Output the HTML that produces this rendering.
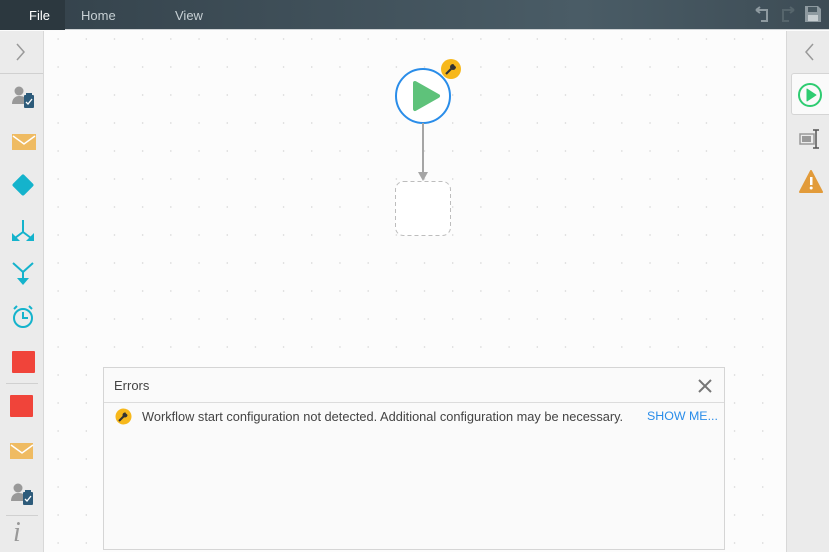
<!DOCTYPE html>
<html><head><style>
*{margin:0;padding:0;box-sizing:border-box}
body{width:829px;height:552px;overflow:hidden;font-family:"Liberation Sans","DejaVu Sans",sans-serif;background:#fcfcfc;position:relative}
.top{position:absolute;left:0;top:0;width:829px;height:30px;background:linear-gradient(90deg,#33414a,#4a5c66 70%,#3d4c55);border-bottom:1px solid #cfd3d5}
.top span{position:absolute;top:8px;font-size:13px;color:#c7d0d4}
.file{position:absolute;left:0;top:0;width:65px;height:30px;background:#2c383f}
.left{position:absolute;left:0;top:31px;width:44px;height:521px;background:#ebebeb;border-right:1px solid #d8d8d8}
.right{position:absolute;left:786px;top:31px;width:43px;height:521px;background:#ebebeb;border-left:1px solid #d8d8d8}
.canvas{position:absolute;left:45px;top:31px;width:741px;height:521px;background-image:radial-gradient(circle,#d6d6d6 0.7px,transparent 0.9px);background-size:28.2px 28px;background-position:-1px -6px}
.ic{position:absolute}
.err{position:absolute;left:103px;top:367px;width:622px;height:183px;background:#fafafa;border:1px solid #d5d5d5}
.err .h{height:35px;border-bottom:1px solid #dcdcdc;font-size:13px;color:#444;padding:10px 10px}
</style></head><body>
<div class="top"><div class="file"></div>
<span style="left:29px;color:#fff">File</span><span style="left:81px">Home</span><span style="left:175px">View</span>
<svg class="ic" style="left:752px;top:6px" width="20" height="18"><path d="M4 4h11v11h-6M4 4l4-3M4 4l4 3" stroke="#8e9aa0" stroke-width="2" fill="none"/></svg>
<svg class="ic" style="left:778px;top:6px" width="20" height="18"><path d="M16 4H5v11h6M16 4l-4-3M16 4l-4 3" stroke="#56656c" stroke-width="2" fill="none"/></svg>
<svg class="ic" style="left:804px;top:5px" width="18" height="18"><path d="M1 1h13l3 3v13H1z" fill="#8e9aa0"/><rect x="4" y="2" width="9" height="5" fill="#4a5a62"/><rect x="4" y="10" width="10" height="6" fill="#c6cdd0"/></svg>
</div>
<div class="canvas"></div>
<div class="left">
<svg class="ic" style="left:15px;top:12px" width="12" height="18"><path d="M2 1l7 8-7 8" stroke="#999" stroke-width="1.5" fill="none"/></svg>
<div style="position:absolute;left:0;top:42px;width:43px;height:1px;background:#d0d0d0"></div>
<svg class="ic" style="left:10px;top:54px" width="26" height="26"><circle cx="9" cy="6" r="4.5" fill="#999"/><path d="M2 19c0-5 3-8 7-8s6 1 7 3v5z" fill="#999"/><rect x="14" y="10" width="10" height="13" rx="1" fill="#2d5b7a"/><rect x="16" y="8" width="6" height="3" fill="#2d5b7a"/><path d="M16 17l2 2 4-5" stroke="#fff" stroke-width="1.3" fill="none"/></svg>
<svg class="ic" style="left:12px;top:102px" width="24" height="18"><rect x="0" y="1" width="24" height="16" fill="#efbb62"/><path d="M1 3l11 8 11-8" stroke="#fff" stroke-width="1.5" fill="none"/></svg>
<svg class="ic" style="left:11px;top:142px" width="24" height="24"><rect x="4" y="4" width="16" height="16" rx="2" transform="rotate(45 12 12)" fill="#14b3cc"/></svg>
<svg class="ic" style="left:11px;top:188px" width="24" height="24"><path d="M12 1v12M12 13l-8 6M12 13l8 6" stroke="#14b3cc" stroke-width="2" fill="none"/><path d="M1 14v8h8zM23 14v8h-8z" fill="#14b3cc"/></svg>
<svg class="ic" style="left:11px;top:230px" width="24" height="26"><path d="M2 2l10 9 10-9M12 11v8" stroke="#14b3cc" stroke-width="2" fill="none"/><path d="M6 17h12l-6 7z" fill="#14b3cc"/></svg>
<svg class="ic" style="left:11px;top:273px" width="24" height="26"><circle cx="12" cy="14" r="9" stroke="#14b3cc" stroke-width="2" fill="none"/><path d="M12 8v6h5M3 5l3-3M21 5l-3-3" stroke="#14b3cc" stroke-width="2" fill="none"/></svg>
<div style="position:absolute;left:12px;top:320px;width:23px;height:22px;background:#f0443a;border-radius:1px"></div>
<div style="position:absolute;left:6px;top:352px;width:32px;height:1px;background:#d0d0d0"></div>
<div style="position:absolute;left:10px;top:364px;width:23px;height:22px;background:#f0443a;border-radius:1px"></div>
<svg class="ic" style="left:10px;top:411px" width="24" height="18"><rect x="0" y="1" width="23" height="16" fill="#efbb62"/><path d="M1 3l11 8 11-8" stroke="#fff" stroke-width="1.5" fill="none"/></svg>
<svg class="ic" style="left:9px;top:451px" width="26" height="26"><circle cx="9" cy="6" r="4.5" fill="#999"/><path d="M2 19c0-5 3-8 7-8s6 1 7 3v5z" fill="#999"/><rect x="14" y="10" width="10" height="13" rx="1" fill="#2d5b7a"/><rect x="16" y="8" width="6" height="3" fill="#2d5b7a"/><path d="M16 17l2 2 4-5" stroke="#fff" stroke-width="1.3" fill="none"/></svg>
<div style="position:absolute;left:6px;top:484px;width:32px;height:1px;background:#d0d0d0"></div>
<div style="position:absolute;left:13px;top:486px;font:italic 28px 'Liberation Serif',serif;color:#999">i</div>
</div>
<div class="right">
<svg class="ic" style="left:17px;top:12px" width="12" height="18"><path d="M9 1L2 9l7 8" stroke="#999" stroke-width="1.5" fill="none"/></svg>
<div style="position:absolute;left:4px;top:42px;width:40px;height:42px;background:#fafafa;border:1px solid #d5d5d5;border-right:none;border-radius:3px 0 0 3px"></div>
<svg class="ic" style="left:10px;top:51px" width="26" height="26"><circle cx="13" cy="13" r="11" stroke="#2ecc71" stroke-width="2" fill="none"/><path d="M10 7l9 6-9 6z" fill="#2ecc71" stroke="#2ecc71" stroke-linejoin="round"/></svg>
<svg class="ic" style="left:12px;top:97px" width="24" height="22"><rect x="1" y="6" width="14" height="10" stroke="#999" stroke-width="1.5" fill="none"/><rect x="3" y="8" width="9" height="6" fill="#999"/><path d="M17 2v18M14 2h6M14 20h6" stroke="#555" stroke-width="1.5"/></svg>
<svg class="ic" style="left:12px;top:139px" width="24" height="24"><path d="M12 1l11 21H1z" fill="#e29b3a" stroke="#e29b3a" stroke-linejoin="round" stroke-width="2"/><rect x="11" y="7" width="2.5" height="8" fill="#fff"/><circle cx="12.2" cy="18" r="1.5" fill="#fff"/></svg>
</div>
<svg class="ic" style="left:394px;top:66px" width="70" height="172">
<circle cx="29" cy="30" r="27" fill="#fff" stroke="#2a8de9" stroke-width="2"/>
<polygon points="21,17 44,30 21,43" fill="#5ec27a" stroke="#5ec27a" stroke-width="4" stroke-linejoin="round"/>
<line x1="29" y1="57" x2="29" y2="108" stroke="#a5a5a5" stroke-width="2"/>
<path d="M24 106h10l-5 9z" fill="#a5a5a5"/>
<rect x="1.5" y="115.5" width="55" height="54" rx="8" fill="#fff" stroke="#bdbdbd" stroke-dasharray="4 3"/>
</svg>
<svg class="ic" style="left:440px;top:58px" width="22" height="22"><circle cx="11" cy="11" r="10" fill="#f7b81b"/><path d="M6 16l5-5" stroke="#333" stroke-width="2.2"/><circle cx="13" cy="9" r="3" fill="#333"/><path d="M14 6l3 3" stroke="#f7b81b" stroke-width="1.5"/></svg>
<div class="err"><div class="h">Errors</div>
<svg class="ic" style="left:594px;top:11px" width="14" height="14"><path d="M1 1l12 12M13 1L1 13" stroke="#777" stroke-width="2"/></svg>
<svg class="ic" style="left:11px;top:40px" width="17" height="17"><circle cx="8.5" cy="8.5" r="8" fill="#f7b81b"/><path d="M4 13l5-5" stroke="#333" stroke-width="2"/><circle cx="10" cy="7" r="2.5" fill="#333"/><path d="M11 4.5l2.5 2.5" stroke="#f7b81b" stroke-width="1.3"/></svg>
<div style="position:absolute;left:38px;top:41px;font-size:12.8px;color:#444">Workflow start configuration not detected. Additional configuration may be necessary.</div>
<div style="position:absolute;left:543px;top:41px;font-size:12.4px;color:#2a8de9">SHOW ME...</div>
</div>
</body></html>
